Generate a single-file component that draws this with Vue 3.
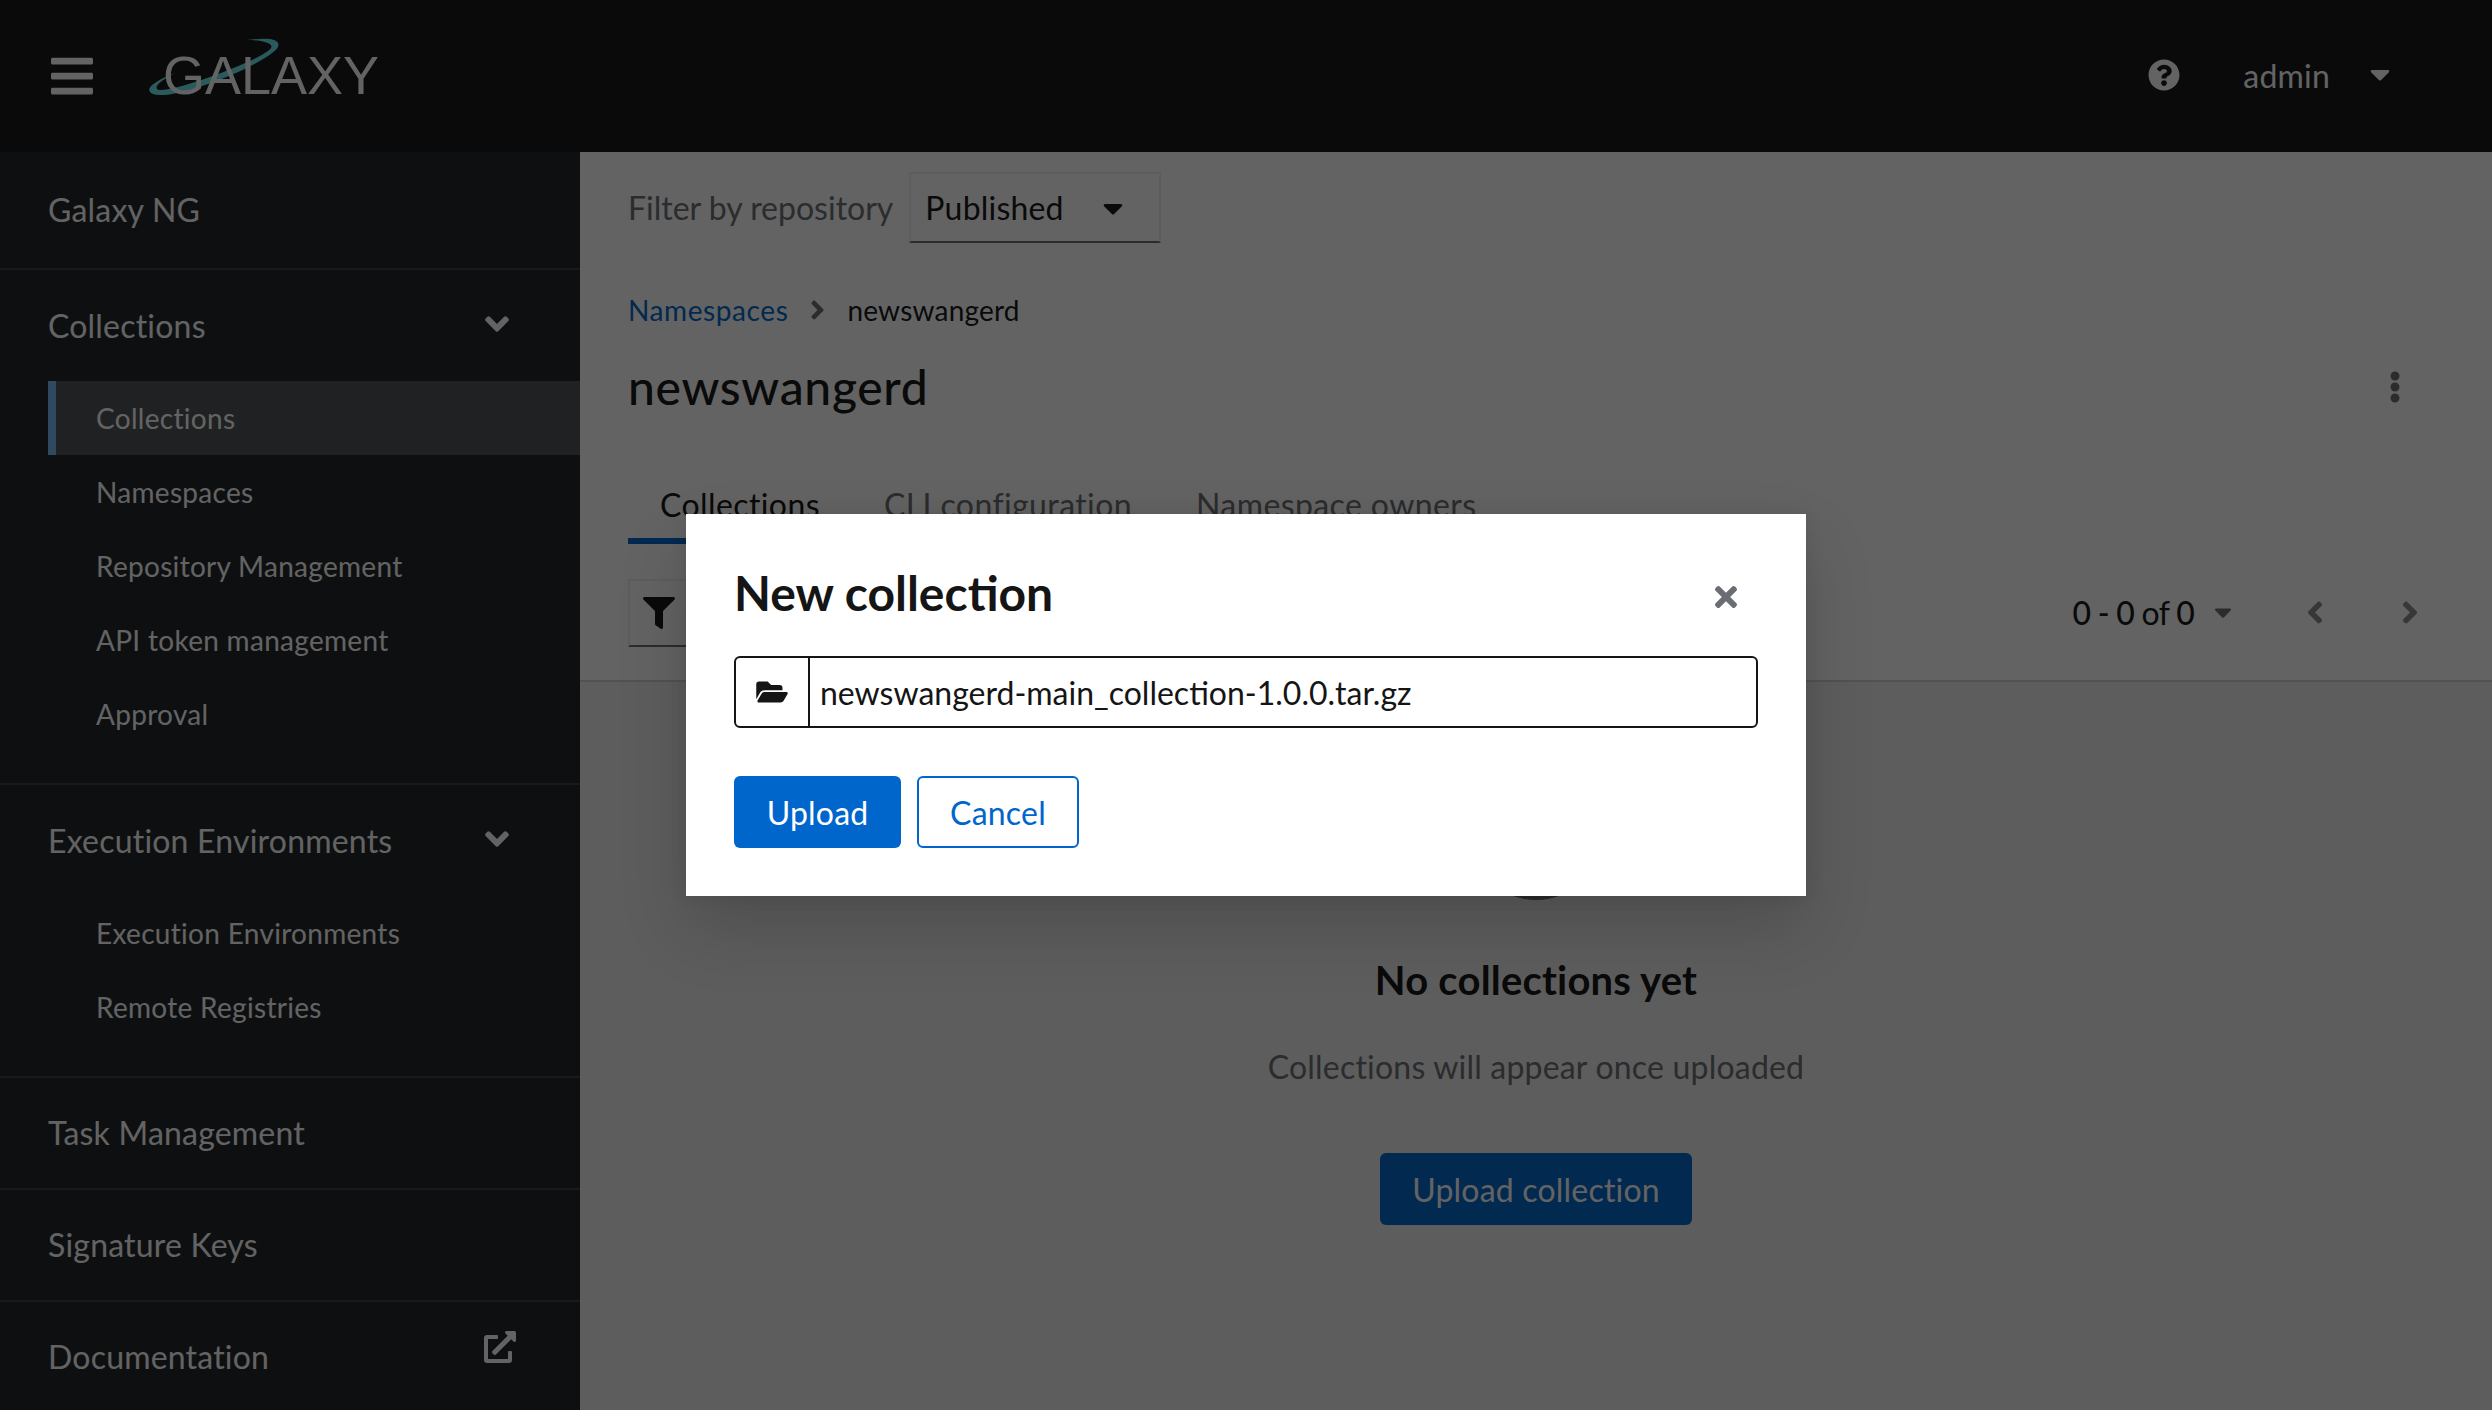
<template>
  <div class="app">
    <header class="topbar">
      <svg class="burger" viewBox="0 0 448 512" preserveAspectRatio="none"><path :d="icons.bars" /></svg>
      <div class="logo">
        <svg class="orbit" viewBox="150 38 132 60"><path d="M248 41C270 38 282 40 279 48C272 62 190 97 160 96C150 96 146 90 156 84C163 79 170 76 176 74C165 80 152 88 160 91C175 93 262 62 272 49C275 44 262 41 248 41Z" /></svg>
        <span class="logo-text">GALAXY</span>
      </div>
      <div class="top-right">
        <svg class="help" viewBox="0 0 512 512"><path :d="icons.question" /></svg>
        <span class="user">admin</span>
        <svg class="user-caret" viewBox="0 0 320 512"><path :d="icons.caret" /></svg>
      </div>
    </header>

    <div class="body">
      <aside class="sidebar">
        <div class="brand-row">Galaxy NG</div>
        <section v-for="group in groups" :key="group.title" class="group" :style="{ height: group.height + 'px' }">
          <div class="group-title">
            <span>{{ group.title }}</span>
            <svg class="chev" viewBox="0 0 320 512"><path :d="icons.angleDown" /></svg>
          </div>
          <a v-for="item in group.items" :key="item" class="sub-item" :class="{ active: item === 'Collections' }">{{ item }}</a>
        </section>
        <div class="nav-row">Task Management</div>
        <div class="nav-row">Signature Keys</div>
        <div class="nav-row doc">
          <span>Documentation</span>
          <svg class="ext" viewBox="0 0 512 512"><path :d="icons.external" /></svg>
        </div>
      </aside>

      <main class="main">
        <div class="repo-bar">
          <span class="repo-label">Filter by repository</span>
          <div class="repo-select">
            <span>Published</span>
            <svg viewBox="0 0 320 512"><path :d="icons.caret" /></svg>
          </div>
        </div>

        <div class="crumbs">
          <a>Namespaces</a>
          <svg viewBox="0 0 256 512"><path :d="icons.angleRight" /></svg>
          <span>newswangerd</span>
        </div>

        <div class="title-row">
          <h1>newswangerd</h1>
          <svg class="kebab" viewBox="0 0 192 512"><path :d="icons.kebab" /></svg>
        </div>

        <nav class="tabs">
          <a class="tab on">Collections</a>
          <a class="tab">CLI configuration</a>
          <a class="tab">Namespace owners</a>
        </nav>

        <div class="toolbar">
          <div class="filter-btn">
            <svg viewBox="0 0 512 512"><path :d="icons.filter" /></svg>
          </div>
          <div class="pager">
            <span class="range"><b>0 - 0</b> of <b>0</b></span>
            <svg class="pager-caret" viewBox="0 0 320 512"><path :d="icons.caret" /></svg>
            <svg class="pager-arrow left" viewBox="0 0 256 512"><path :d="icons.angleLeft" /></svg>
            <svg class="pager-arrow" viewBox="0 0 256 512"><path :d="icons.angleRight" /></svg>
          </div>
        </div>

        <div class="empty">
          <div class="empty-icon"></div>
          <h2>No collections yet</h2>
          <p>Collections will appear once uploaded</p>
          <button class="btn primary big">Upload collection</button>
        </div>
      </main>
    </div>

    <div class="backdrop">
      <div class="modal">
        <div class="modal-head">
          <h3>New collection</h3>
          <svg class="close" viewBox="0 0 352 512"><path :d="icons.times" /></svg>
        </div>
        <div class="file-input">
          <div class="file-icon">
            <svg viewBox="0 0 576 512"><path :d="icons.folder" /></svg>
          </div>
          <div class="file-name">newswangerd-main_collection-1.0.0.tar.gz</div>
        </div>
        <div class="modal-actions">
          <button class="btn primary">Upload</button>
          <button class="btn outline">Cancel</button>
        </div>
      </div>
    </div>
  </div>
</template>

<script setup>
const groups = [
  {
    title: 'Collections',
    height: 515,
    items: ['Collections', 'Namespaces', 'Repository Management', 'API token management', 'Approval'],
  },
  {
    title: 'Execution Environments',
    height: 293,
    items: ['Execution Environments', 'Remote Registries'],
  },
]

const icons = {
  bars: 'M16 132h416c8.837 0 16-7.163 16-16V76c0-8.837-7.163-16-16-16H16C7.163 60 0 67.163 0 76v40c0 8.837 7.163 16 16 16zm0 160h416c8.837 0 16-7.163 16-16v-40c0-8.837-7.163-16-16-16H16c-8.837 0-16 7.163-16 16v40c0 8.837 7.163 16 16 16zm0 160h416c8.837 0 16-7.163 16-16v-40c0-8.837-7.163-16-16-16H16c-8.837 0-16 7.163-16 16v40c0 8.837 7.163 16 16 16z',
  question: 'M504 256c0 136.997-111.043 248-248 248S8 392.997 8 256C8 119.083 119.043 8 256 8s248 111.083 248 248zM262.655 90c-54.497 0-89.255 22.957-116.549 63.758-3.536 5.286-2.353 12.415 2.715 16.258l34.699 26.31c5.205 3.947 12.621 3.008 16.665-2.122 17.864-22.658 30.113-35.797 57.303-35.797 20.429 0 45.698 13.148 45.698 32.958 0 14.976-12.363 22.667-32.534 33.976C247.128 238.528 216 254.941 216 296v4c0 6.627 5.373 12 12 12h56c6.627 0 12-5.373 12-12v-1.333c0-28.462 83.186-29.647 83.186-106.667 0-58.002-60.165-102-116.531-102zM256 338c-25.365 0-46 20.635-46 46 0 25.364 20.635 46 46 46s46-20.636 46-46c0-25.365-20.635-46-46-46z',
  caret: 'M31.3 192h257.3c17.8 0 26.7 21.5 14.1 34.1L174.1 354.8c-7.8 7.8-20.5 7.8-28.3 0L17.2 226.1C4.6 213.5 13.5 192 31.3 192z',
  angleDown: 'M143 352.3L7 216.3c-9.4-9.4-9.4-24.6 0-33.9l22.6-22.6c9.4-9.4 24.6-9.4 33.9 0l96.4 96.4 96.4-96.4c9.4-9.4 24.6-9.4 33.9 0l22.6 22.6c9.4 9.4 9.4 24.6 0 33.9l-136 136c-9.2 9.4-24.4 9.4-33.8 0z',
  angleLeft: 'M31.7 239l136-136c9.4-9.4 24.6-9.4 33.9 0l22.6 22.6c9.4 9.4 9.4 24.6 0 33.9L127.9 256l96.4 96.4c9.4 9.4 9.4 24.6 0 33.9L201.7 409c-9.4 9.4-24.6 9.4-33.9 0l-136-136c-9.5-9.4-9.5-24.6-.1-34z',
  angleRight: 'M224.3 273l-136 136c-9.4 9.4-24.6 9.4-33.9 0l-22.6-22.6c-9.4-9.4-9.4-24.6 0-33.9l96.4-96.4-96.4-96.4c-9.4-9.4-9.4-24.6 0-33.9L54.3 103c9.4-9.4 24.6-9.4 33.9 0l136 136c9.5 9.4 9.5 24.6.1 34z',
  external: 'M432,320H400a16,16,0,0,0-16,16V448H64V128H208a16,16,0,0,0,16-16V80a16,16,0,0,0-16-16H48A48,48,0,0,0,0,112V464a48,48,0,0,0,48,48H400a48,48,0,0,0,48-48V336A16,16,0,0,0,432,320ZM488,0h-128c-21.37,0-32.05,25.91-17,41l35.73,35.73L135,320.37a24,24,0,0,0,0,34L157.67,377a24,24,0,0,0,34,0L435.28,133.32,471,169c15,15,41,4.5,41-17V24A24,24,0,0,0,488,0Z',
  kebab: 'M96 184c39.8 0 72 32.2 72 72s-32.2 72-72 72-72-32.2-72-72 32.2-72 72-72zM24 80c0 39.8 32.2 72 72 72s72-32.2 72-72S135.8 8 96 8 24 40.2 24 80zm0 352c0 39.8 32.2 72 72 72s72-32.2 72-72-32.2-72-72-72-72 32.2-72 72z',
  filter: 'M487.976 0H24.028C2.71 0-8.047 25.866 7.058 40.971L192 225.941V432c0 7.831 3.821 15.17 10.237 19.662l80 55.98C298.02 518.69 320 507.493 320 487.98V225.941l184.947-184.97C520.021 25.896 509.338 0 487.976 0z',
  folder: 'M572.694 292.093L500.27 416.248A63.997 63.997 0 0 1 444.989 448H45.025c-18.523 0-30.064-20.093-20.731-36.093l72.424-124.155A64 64 0 0 1 152 256h399.964c18.523 0 30.064 20.093 20.73 36.093zM152 224h328v-48c0-26.51-21.49-48-48-48H272l-64-64H48C21.49 64 0 85.49 0 112v278.046l69.077-118.418C86.214 242.25 117.989 224 152 224z',
  times: 'M242.72 256l100.07-100.07c12.28-12.28 12.28-32.19 0-44.48l-22.24-22.24c-12.28-12.28-32.19-12.28-44.48 0L176 189.28 75.93 89.21c-12.28-12.28-32.19-12.28-44.48 0L9.21 111.45c-12.28 12.28-12.28 32.19 0 44.48L109.28 256 9.21 356.07c-12.28 12.28-12.28 32.19 0 44.48l22.24 22.24c12.28 12.28 32.2 12.28 44.48 0L176 322.72l100.07 100.07c12.28 12.28 32.2 12.28 44.48 0l22.24-22.24c12.28-12.28 12.28-32.19 0-44.48L242.72 256z',
}
</script>

<style>
html, body { margin: 0; background: #fff; }
</style>

<style scoped>
.app {
  position: relative;
  width: 2492px;
  height: 1410px;
  overflow: hidden;
  display: flex;
  flex-direction: column;
  font-family: Lato, "Noto Sans", sans-serif;
  font-size: 32px;
  letter-spacing: 0.2px;
  color: #151515;
  background: #fff;
}
svg { fill: currentColor; display: block; flex: none; }

/* top bar */
.topbar {
  height: 152px;
  flex: none;
  display: flex;
  align-items: center;
  background: #151515;
  color: #fff;
  padding-left: 51px;
}
.burger { width: 42px; height: 48px; margin-top: -1px; }
.logo { position: relative; margin-left: 70px; margin-top: -2px; }
.logo-text {
  position: relative;
  font-family: "Liberation Sans", Arial, sans-serif;
  font-size: 54px;
  font-weight: 400;
  letter-spacing: 0;
  color: #fff;
  line-height: 60px;
  display: block;
}
.orbit { position: absolute; left: -14px; top: -8px; width: 132px; height: 60px; fill: #69e7ed; }
.top-right { margin-left: auto; display: flex; align-items: center; padding-right: 102px; }
.help { width: 32px; height: 32px; margin-top: -2px; }
.user { margin-left: 63px; line-height: 40px; }
.user-caret { width: 20px; height: 32px; margin-left: 40px; margin-top: -4px; }

.body { flex: 1; display: flex; min-height: 0; }

/* sidebar */
.sidebar {
  width: 580px;
  flex: none;
  background: #212427;
  color: #fff;
  box-sizing: border-box;
}
.brand-row { height: 116px; padding: 37px 48px 0; box-sizing: border-box; line-height: 42px; }
.group { border-top: 2px solid #3c3f42; box-sizing: border-box; }
.group-title {
  height: 111px;
  display: flex;
  align-items: center;
  justify-content: space-between;
  padding: 0 71px 0 48px;
}
.chev { width: 24px; height: 38px; margin-top: -4px; }
.sub-item {
  display: block;
  height: 74px;
  line-height: 74px;
  font-size: 28px;
  letter-spacing: 0.3px;
  margin-left: 48px;
  padding-left: 48px;
  box-sizing: border-box;
}
.sub-item.active { background: #4f5255; padding-left: 40px; border-left: 8px solid #73bcf7; }
.nav-row {
  height: 112px;
  border-top: 2px solid #3c3f42;
  box-sizing: border-box;
  display: flex;
  align-items: center;
  justify-content: space-between;
  padding: 0 64px 2px 48px;
}
.ext { width: 32px; height: 32px; margin-top: -18px; }

/* main */
.main { flex: 1; min-width: 0; display: flex; flex-direction: column; }
.repo-bar { display: flex; align-items: center; padding: 20px 48px 0; height: 71px; }
.repo-label { color: #6a6e73; letter-spacing: 0; }
.repo-select {
  width: 252px;
  height: 71px;
  margin-left: 16px;
  box-sizing: border-box;
  border: 2px solid #f0f0f0;
  border-bottom-color: #6a6e73;
  padding: 0 36px 0 14px;
  display: flex;
  align-items: center;
  justify-content: space-between;
}
.repo-select svg { width: 20px; height: 32px; }
.crumbs {
  margin-top: 46px;
  padding: 0 48px;
  display: flex;
  align-items: center;
  font-size: 28px;
  line-height: 42px;
}
.crumbs a { color: #06c; letter-spacing: 0.6px; }
.crumbs svg { width: 15px; height: 30px; margin: 0 22px; color: #6a6e73; }
.title-row {
  margin-top: 24px;
  padding: 0 90px 0 48px;
  display: flex;
  align-items: center;
  justify-content: space-between;
}
h1 { margin: 0; font-size: 48px; font-weight: 500; line-height: 64px; letter-spacing: 0.7px; }
.kebab { width: 14px; height: 32px; color: #6a6e73; }
.tabs { margin-top: 33px; padding-left: 48px; display: flex; height: 122px; box-sizing: border-box; letter-spacing: 0.4px; }
.tab { padding: 32px 32px 0; height: 92px; box-sizing: border-box; color: #6a6e73; line-height: 42px; }
.tab.on { color: #151515; border-bottom: 6px solid #06c; }
.toolbar {
  height: 138px;
  margin-top: -30px;
  flex: none;
  box-sizing: border-box;
  border-bottom: 2px solid #d2d2d2;
  display: flex;
  align-items: center;
  padding: 0 48px;
  justify-content: space-between;
}
.filter-btn {
  width: 62px;
  height: 68px;
  margin-top: 2px;
  box-sizing: border-box;
  border: 2px solid #f0f0f0;
  border-bottom-color: #6a6e73;
  display: flex;
  align-items: center;
  justify-content: center;
}
.filter-btn svg { width: 32px; height: 32px; }
.pager { display: flex; align-items: center; padding-right: 25px; }
.range { letter-spacing: -0.7px; }
.range b { font-weight: 500; }
.pager-caret { width: 18px; height: 28px; margin-left: 20px; color: #6a6e73; }
.pager-arrow { width: 18px; height: 35px; color: #8a8d90; margin-left: 77px; }
.pager-arrow.left { margin-left: 74px; }

.empty { flex: 1; background: #f0f0f0; position: relative; display: flex; flex-direction: column; align-items: center; }
.empty-icon { width: 136px; height: 136px; border-radius: 50%; background: #6a6e73; margin-top: 82px; }
h2 { margin: 54px 0 0; font-size: 40px; font-weight: 700; line-height: 52px; }
.empty p { margin: 37px 0 0; color: #6a6e73; line-height: 48px; }
.btn {
  font: inherit;
  letter-spacing: inherit;
  height: 72px;
  border-radius: 6px;
  padding: 0;
  box-sizing: border-box;
  border: 0;
  white-space: nowrap;
}
.btn.primary { background: #06c; color: #fff; }
.btn.big { margin-top: 62px; width: 312px; }
.btn.outline { background: #fff; color: #06c; border: 2px solid #06c; }

/* modal */
.backdrop { position: absolute; inset: 0; background: rgba(3, 3, 3, 0.62); }
.modal {
  position: absolute;
  left: 686px;
  top: 514px;
  width: 1120px;
  height: 382px;
  box-sizing: border-box;
  padding: 48px;
  background: #fff;
  box-shadow: 0 32px 64px rgba(3, 3, 3, 0.16), 0 0 16px rgba(3, 3, 3, 0.08);
}
.modal-head { display: flex; align-items: center; justify-content: space-between; height: 62px; padding-right: 20px; }
h3 { margin: 0; font-size: 48px; font-weight: 700; line-height: 62px; letter-spacing: 0; }
.close { width: 24px; height: 32px; color: #6a6e73; margin-top: 8px; }
.file-input {
  margin-top: 32px;
  height: 72px;
  box-sizing: border-box;
  border: 2px solid #151515;
  border-radius: 6px;
  display: flex;
}
.file-icon { width: 74px; border-right: 2px solid #151515; display: flex; align-items: center; justify-content: center; box-sizing: border-box; }
.file-icon svg { width: 32px; height: 28px; }
.file-name { padding-left: 10px; line-height: 70px; letter-spacing: 0; }
.modal-actions { margin-top: 48px; display: flex; gap: 16px; }
.modal-actions .btn { width: 167px; }
.modal-actions .outline { width: 162px; }
</style>
